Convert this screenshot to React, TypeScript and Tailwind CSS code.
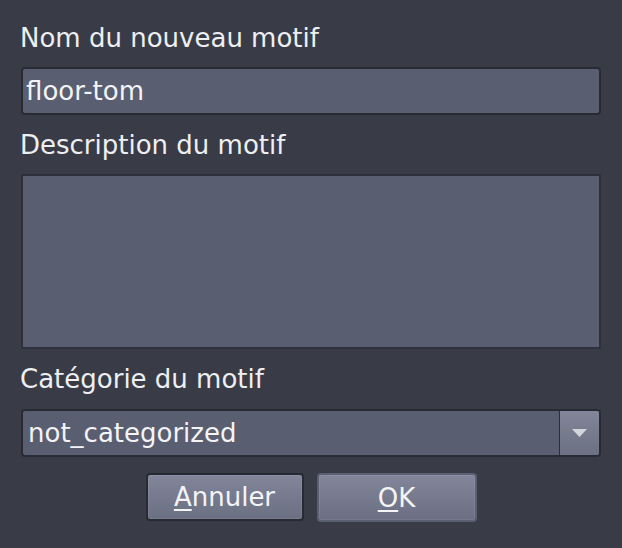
export default function App() {
  const font = { fontFamily: '"DejaVu Sans", "Liberation Sans", sans-serif' };
  return (
    <div
      className="w-[622px] h-[548px] bg-[#393c47] text-[#eeeff2] text-[26px] leading-[30px] flex flex-col px-[21px]"
      style={font}
    >
      {/* Nom */}
      <div className="mt-[23px] h-[30px] -ml-px">Nom du nouveau motif</div>
      <div className="mt-[14px] h-[48px] rounded-[4px] border-2 border-[#282b34] bg-[#5a5e71] flex items-center pl-[3px]">
        <span className="text-[#f4f4f6]">floor-tom</span>
      </div>

      {/* Description */}
      <div className="mt-[15px] h-[30px] -ml-px">Description du motif</div>
      <div className="mt-[14px] h-[175px] border-2 border-[#2e313b] bg-[#5a5e71]" />

      {/* Catégorie */}
      <div className="mt-[15px] h-[30px] -ml-px">Catégorie du motif</div>
      <div className="mt-[15px] h-[48px] rounded-[4px] border-2 border-[#282b34] bg-[#5a5e71] flex overflow-hidden">
        <div className="flex-1 flex items-center pl-[5px] text-[#f4f4f6]">not_categorized</div>
        <div className="w-[40px] border-l border-[#2b2e38] bg-gradient-to-b from-[#83869a] to-[#6c7083] flex items-center justify-center">
          <svg width="15" height="8" viewBox="0 0 15 8">
            <polygon points="0,0 15,0 7.5,8" fill="#d4d6de" />
          </svg>
        </div>
      </div>

      {/* Boutons */}
      <div className="mt-[16px] flex justify-center gap-[13px]">
        <button
          className="w-[158px] h-[48px] rounded-[4px] border-2 border-[#272a33] bg-gradient-to-b from-[#83869a] to-[#6b6f82] shadow-[inset_0_0_0_1px_rgba(255,255,255,0.08)] text-[#f4f4f6] leading-[30px]"
          style={font}
        >
          <span className="underline decoration-2 underline-offset-[3px]">A</span>nnuler
        </button>
        <button
          className="w-[160px] h-[49px] rounded-[4px] border-2 border-[#5b5f72] bg-gradient-to-b from-[#83869a] to-[#6b6f82] shadow-[inset_0_0_0_1px_rgba(255,255,255,0.08)] text-[#f4f4f6] leading-[30px]"
          style={font}
        >
          <span className="underline decoration-2 underline-offset-[3px]">O</span>K
        </button>
      </div>
    </div>
  );
}
